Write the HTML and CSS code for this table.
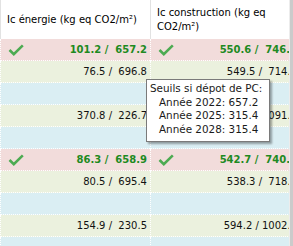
FILE: index.html
```html
<!DOCTYPE html>
<html lang="fr">
<head>
<meta charset="utf-8">
<link rel="stylesheet" href="styles.css">
</head>
<body>
<div class="wrap">
  <div class="grid">
    <div class="hcell">Ic énergie (kg eq CO2/m²)</div>
    <div class="hcell">Ic construction (kg eq CO2/m²)</div>

    <div class="cell pink"><svg class="chk" viewBox="0 0 16 12" width="16" height="12"><path d="M1.5 6 L5.8 10.2 L14.8 1.4"/></svg><span class="num bold">101.2 /  657.2</span></div>
    <div class="cell pink"><svg class="chk" viewBox="0 0 16 12" width="16" height="12"><path d="M1.5 6 L5.8 10.2 L14.8 1.4"/></svg><span class="num bold">550.6 /  746.3</span></div>

    <div class="cell beige"><span class="num">76.5 /  696.8</span></div>
    <div class="cell beige"><span class="num">549.5 /  714.2</span></div>

    <div class="cell blue"></div>
    <div class="cell blue"></div>

    <div class="cell beige"><span class="num">370.8 /  226.7</span></div>
    <div class="cell beige"><span class="num">584.1 / 1091.4</span></div>

    <div class="cell blue"></div>
    <div class="cell blue"></div>

    <div class="cell pink"><svg class="chk" viewBox="0 0 16 12" width="16" height="12"><path d="M1.5 6 L5.8 10.2 L14.8 1.4"/></svg><span class="num bold">86.3 /  658.9</span></div>
    <div class="cell pink"><svg class="chk" viewBox="0 0 16 12" width="16" height="12"><path d="M1.5 6 L5.8 10.2 L14.8 1.4"/></svg><span class="num bold">542.7 /  740.1</span></div>

    <div class="cell beige"><span class="num">80.5 /  695.4</span></div>
    <div class="cell beige"><span class="num">538.3 /  718.6</span></div>

    <div class="cell blue"></div>
    <div class="cell blue"></div>

    <div class="cell beige"><span class="num">154.9 /  230.5</span></div>
    <div class="cell beige"><span class="num">594.2 / 1002.5</span></div>

    <div class="cell blue"></div>
    <div class="cell blue"></div>
  </div>
  <div class="strip"></div>

  <div class="tip">
    <div class="tline">Seuils si dépot de PC:</div>
    <div class="tline ind">Année 2022: 657.2</div>
    <div class="tline ind">Année 2025: 315.4</div>
    <div class="tline ind">Année 2028: 315.4</div>
  </div>
</div>
</body>
</html>
```

FILE: styles.css
```css
html, body {
  margin: 0;
  padding: 0;
  background: #ffffff;
}

body {
  font-family: "DejaVu Sans", "Liberation Sans", sans-serif;
  font-size: 10px;
  color: #000000;
}

.wrap {
  position: relative;
  display: flex;
  width: 293px;
  height: 246px;
  overflow: hidden;
}

.grid {
  display: grid;
  grid-template-columns: 150px 150px;
  width: 289px;
  overflow: hidden;
  align-content: start;
  flex: none;
}

.strip {
  flex: none;
  width: 3px;
  border-left: 1px solid #ececec;
  background: #cbcbcb;
}

.hcell {
  height: 39px;
  box-sizing: border-box;
  border-left: 1px solid #e2e2e2;
  padding: 0 6px;
  display: flex;
  align-items: center;
  line-height: 14px;
  background: #ffffff;
}

.cell {
  height: 22px;
  box-sizing: border-box;
  border-left: 1px dotted #ffffff;
  border-bottom: 1px dotted #ffffff;
  padding: 0 3px 0 7px;
  display: flex;
  align-items: center;
  white-space: pre;
}

.pink { background: #f2dcdb; }
.beige { background: #ebf1de; }
.blue { background: #daeef3; }

.num {
  margin-left: auto;
  color: #111111;
}

.num.bold {
  font-weight: bold;
  color: #1e8a22;
}

.chk {
  display: block;
  flex: none;
}

.chk path {
  fill: none;
  stroke: #4dab52;
  stroke-width: 2.6;
  stroke-linecap: butt;
  stroke-linejoin: miter;
}

.tip {
  position: absolute;
  left: 146px;
  top: 79px;
  width: 119px;
  height: 59px;
  border: 1px solid #7a7a7a;
  background: #ffffff;
  box-shadow: 2px 2px 2px rgba(0, 0, 0, 0.35);
  padding: 2px 0 0 3px;
  box-sizing: content-box;
  font-size: 10.4px;
  color: #1a1a1a;
}

.tline {
  line-height: 13.6px;
  white-space: nowrap;
}

.tline.ind {
  padding-left: 9px;
}
```
